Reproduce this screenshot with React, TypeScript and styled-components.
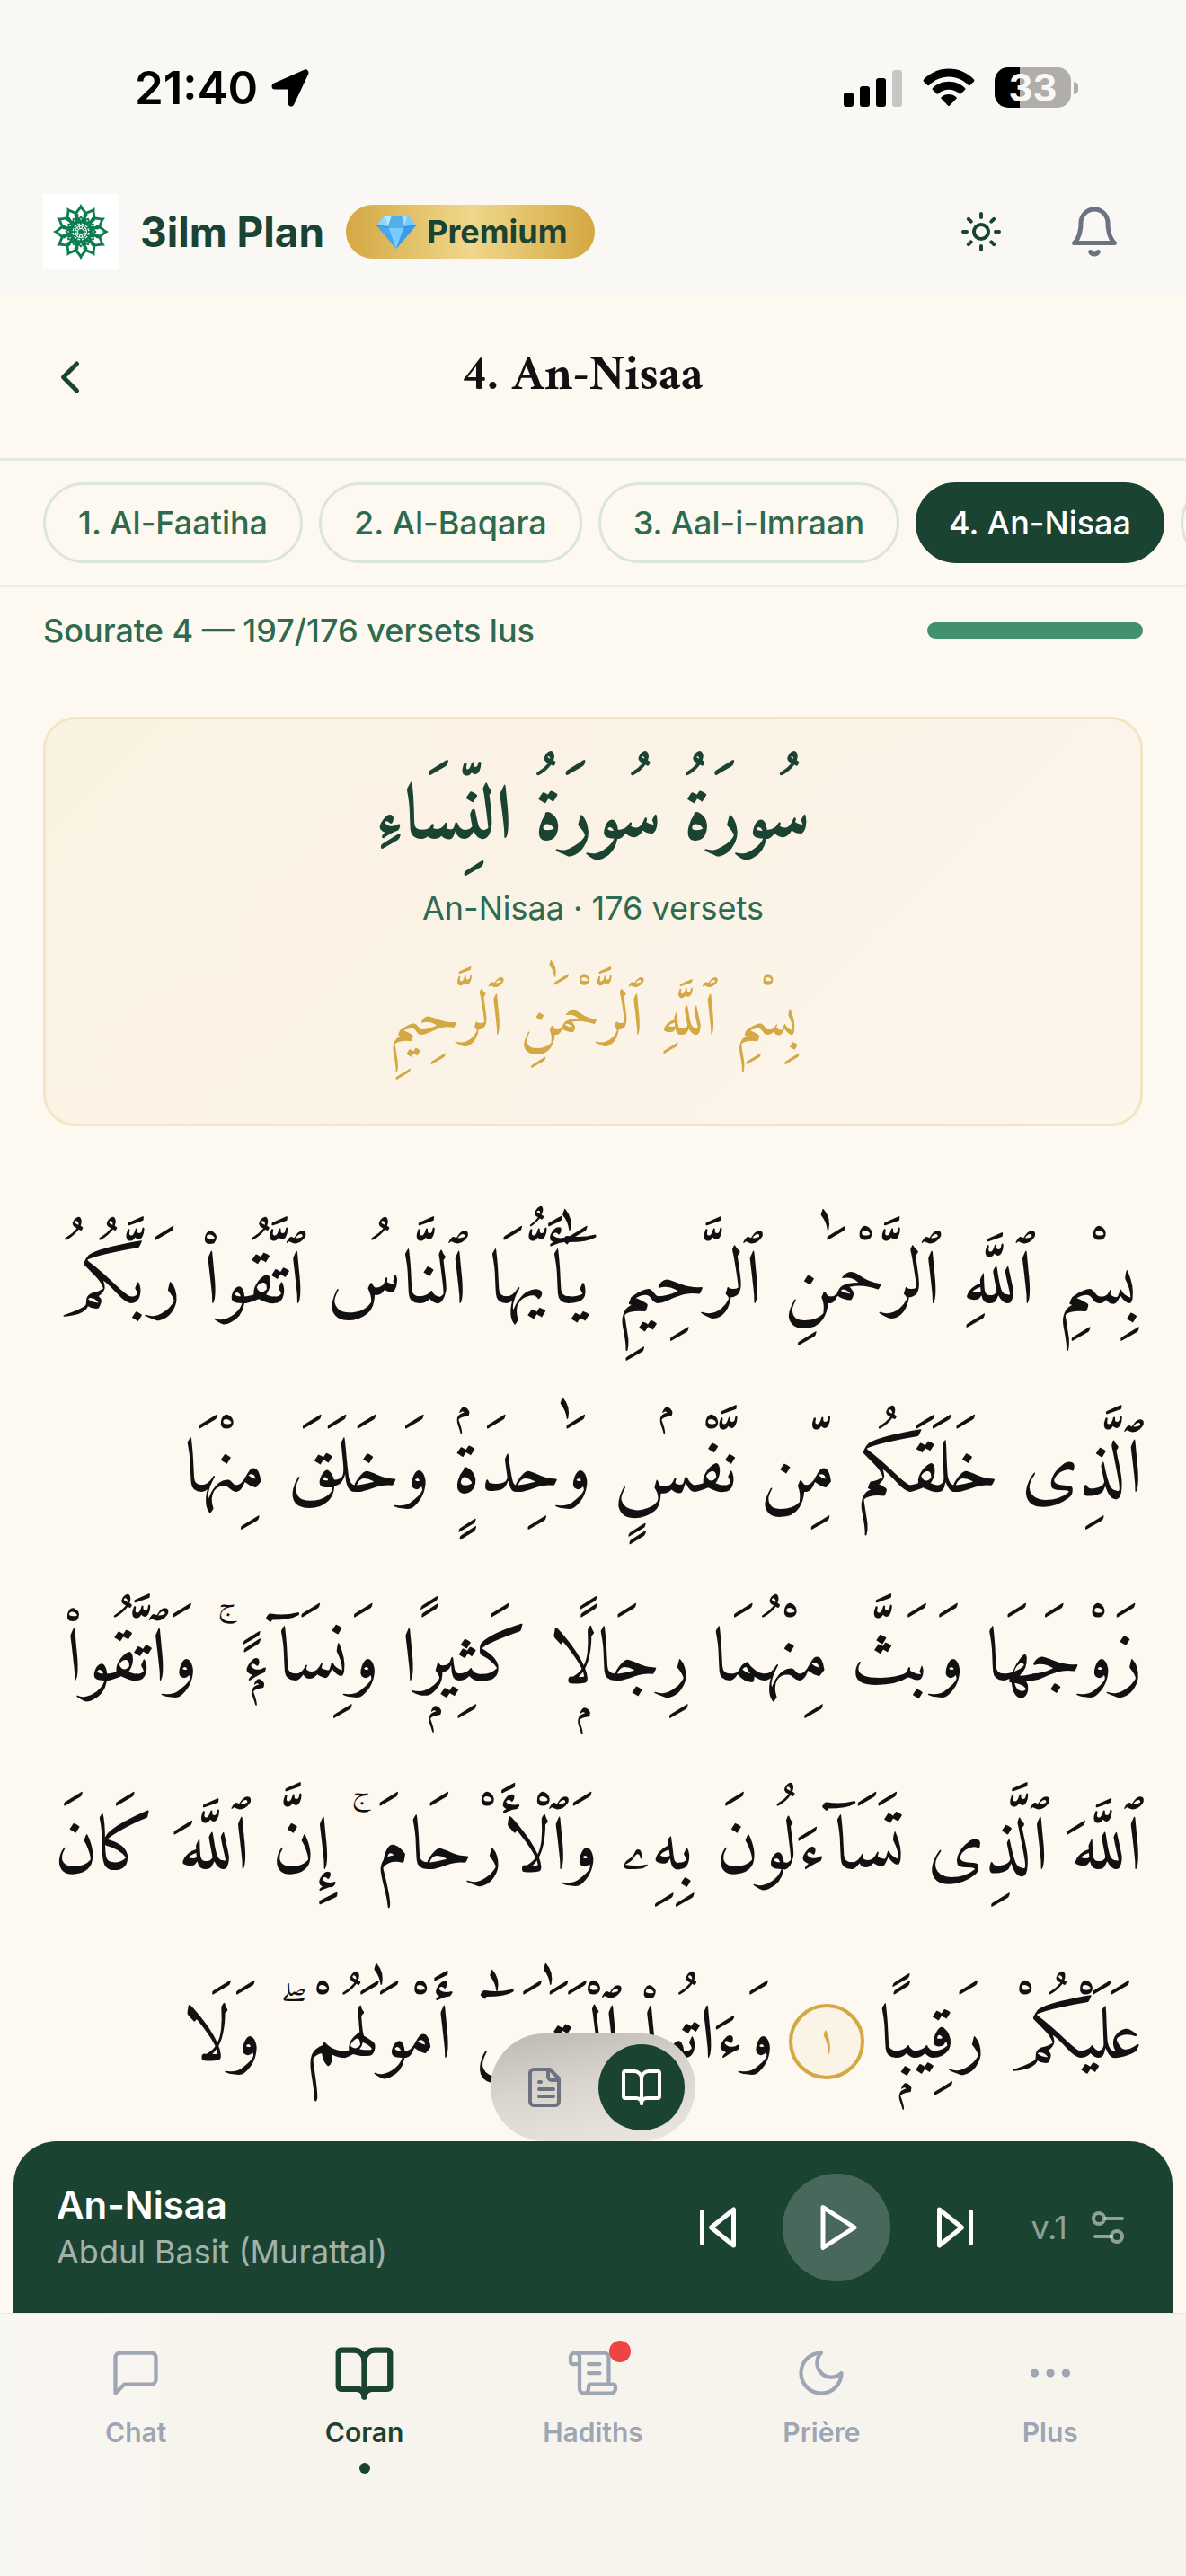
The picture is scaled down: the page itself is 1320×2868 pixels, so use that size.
import React from 'react';
import styled, { createGlobalStyle, css } from 'styled-components';

const color = {
  green: '#1b4332',
  leaf: '#2d6a4f',
  progress: '#40916c',
  gold: '#d4a843',
  cream: '#fef9f0',
  bar: '#f9f8f4',
  line: '#dae6db',
  slate: '#6b7280',
  mist: '#9ea5b3',
  ink: '#111111',
};

const ui = "Inter, 'Liberation Sans', sans-serif";
const quran = "Amiri, 'Scheherazade New', 'DejaVu Sans', serif";

const GlobalStyle = createGlobalStyle`
  *, *::before, *::after { box-sizing: border-box; }
  body { margin: 0; background: ${color.cream}; font-family: ${ui}; color: ${color.ink}; }
  button { margin: 0; padding: 0; border: 0; background: none; font: inherit; color: inherit; cursor: pointer; }
  h1, h2, p, ul { margin: 0; padding: 0; font-weight: inherit; }
  svg { display: block; flex: none; }
`;

const Page = styled.div`
  display: flex;
  flex-direction: column;
  min-height: 100vh;
`;

const StatusBar = styled.div`
  display: flex;
  justify-content: space-between;
  align-items: center;
  padding: 72px 120px 63px 150px;
  background: ${color.bar};
  color: #000;
`;

const StatusGroup = styled.div<{ $gap: number }>`
  display: flex;
  align-items: center;
  gap: ${(p) => p.$gap}px;
`;

const Clock = styled.time`
  font-size: 51px;
  line-height: 51px;
  font-weight: 600;
`;

const Battery = styled.div`
  display: flex;
  align-items: center;
  gap: 3px;
`;

const BatteryBody = styled.div`
  width: 85px;
  border-radius: 15px;
  text-align: center;
  font-size: 42px;
  line-height: 45px;
  font-weight: 700;
  color: ${color.bar};
  background: linear-gradient(90deg, #000 33%, #afaeab 33%);
`;

const BatteryCap = styled.span`
  width: 5px;
  height: 14px;
  border-radius: 0 6px 6px 0;
  background: #afaeab;
`;

const AppBar = styled.header`
  display: flex;
  align-items: center;
  gap: 24px;
  padding: 30px 48px;
  background: ${color.bar};
`;

const LogoTile = styled.div`
  display: grid;
  place-items: center;
  width: 84px;
  height: 84px;
  background: #fff;
`;

const Brand = styled.span`
  font-size: 46px;
  line-height: 60px;
  font-weight: 700;
  color: ${color.green};
`;

const PremiumBadge = styled.span`
  display: flex;
  align-items: center;
  gap: 12px;
  height: 60px;
  padding: 0 30px 0 34px;
  border-radius: 30px;
  font-size: 36px;
  font-weight: 700;
  color: ${color.green};
  background: linear-gradient(90deg, ${color.gold}, #f0d78c 50%, ${color.gold});
`;

const AppActions = styled.div`
  display: flex;
  align-items: center;
  gap: 18px;
  margin-left: auto;
`;

const IconButton = styled.button<{ $size?: number; $tone?: string }>`
  display: grid;
  place-items: center;
  flex: none;
  width: ${(p) => p.$size ?? 108}px;
  height: ${(p) => Math.min(p.$size ?? 84, 96)}px;
  color: ${(p) => p.$tone ?? color.green};
`;

const SurahHeader = styled.div`
  display: flex;
  align-items: center;
  height: 183px;
  padding: 0 48px;
  border-bottom: 3px solid #e3eadf;
  background: #fdf8f0;
`;

const SurahTitle = styled.h1`
  flex: 1;
  padding-right: 84px;
  text-align: center;
  font-family: ${quran};
  font-size: 54px;
  line-height: 84px;
  font-weight: 700;
`;

const TabStrip = styled.nav`
  display: flex;
  gap: 18px;
  padding: 24px 48px;
  border-bottom: 3px solid #eaeee4;
  overflow-x: auto;
  scrollbar-width: none;
`;

const SurahTab = styled.button<{ $active?: boolean }>`
  flex: none;
  height: 90px;
  padding: 0 36px;
  border: 3px solid ${color.line};
  border-radius: 45px;
  font-size: 36px;
  font-weight: 500;
  white-space: nowrap;
  color: ${color.leaf};
  ${(p) =>
    p.$active &&
    css`
      padding: 0 34px;
      border-color: ${color.green};
      background: ${color.green};
      color: #fff;
    `}
`;

const ProgressRow = styled.div`
  display: flex;
  align-items: center;
  justify-content: space-between;
  padding: 24px 48px;
  font-size: 36px;
  line-height: 48px;
  font-weight: 500;
  color: ${color.leaf};
`;

const ProgressBar = styled.div`
  width: 240px;
  height: 18px;
  border-radius: 9px;
  background: ${color.progress};
`;

const Reader = styled.main`
  flex: 1;
  display: flex;
  flex-direction: column;
  gap: 72px;
  padding: 48px 48px 0;
`;

const SurahCard = styled.section`
  padding: 36px;
  border: 3px solid #f3e5c6;
  border-radius: 36px;
  text-align: center;
  background: linear-gradient(135deg, #faf3e1, #fbf2e6 40%, #fdf6ea);
`;

const CardTitle = styled.h2`
  font-family: ${quran};
  font-size: 84px;
  line-height: 152px;
  font-weight: 700;
  color: ${color.green};
`;

const CardMeta = styled.p`
  font-size: 36px;
  line-height: 44px;
  color: ${color.leaf};
`;

const Basmala = styled.p`
  margin-top: 24px;
  font-family: ${quran};
  font-size: 66px;
  line-height: 158px;
  color: ${color.gold};
`;

const Verses = styled.p`
  font-family: ${quran};
  font-size: 84px;
  line-height: 210px;
  text-indent: 6px;
`;

const PauseSign = styled.span`
  font-size: 48px;
  line-height: 48px;
`;

const VerseMark = styled.span`
  display: inline-flex;
  align-items: center;
  justify-content: center;
  width: 84px;
  height: 84px;
  margin: 0 16px;
  border: 4px solid ${color.gold};
  border-radius: 50%;
  vertical-align: middle;
  text-indent: 0;
  font-size: 42px;
  line-height: 76px;
  color: ${color.gold};
  background: #fbf3e6;
`;

const Dock = styled.footer`
  position: relative;
`;

const ViewToggle = styled.div`
  position: absolute;
  bottom: 100%;
  left: 50%;
  transform: translateX(-50%);
  display: flex;
  gap: 12px;
  padding: 12px;
  border-radius: 60px;
  background: linear-gradient(170deg, #c2bfb8 10%, #d9d4ce 45%, #ece7e1);
`;

const ViewButton = styled.button<{ $active?: boolean }>`
  display: grid;
  place-items: center;
  width: 96px;
  height: 96px;
  border-radius: 50%;
  color: ${(p) => (p.$active ? '#fff' : color.slate)};
  background: ${(p) => (p.$active ? color.green : 'transparent')};
`;

const Player = styled.section`
  display: flex;
  align-items: center;
  gap: 24px;
  margin: 0 15px;
  padding: 36px 48px 35px;
  border-radius: 48px 48px 0 0;
  background: ${color.green};
  color: #fff;
`;

const Track = styled.div`
  flex: 1;
`;

const TrackTitle = styled.p`
  font-size: 42px;
  line-height: 54px;
  font-weight: 600;
`;

const TrackReciter = styled.p`
  font-size: 36px;
  line-height: 51px;
  color: rgba(255, 255, 255, 0.6);
`;

const PlayButton = styled.button`
  display: grid;
  place-items: center;
  width: 120px;
  height: 120px;
  border-radius: 50%;
  background: rgba(255, 255, 255, 0.2);
`;

const VerseSettings = styled.button`
  display: flex;
  align-items: center;
  gap: 21px;
  padding-left: 12px;
  font-size: 36px;
  color: rgba(255, 255, 255, 0.5);
`;

const TabBar = styled.nav`
  display: grid;
  grid-template-columns: repeat(5, 1fr);
  align-items: start;
  padding: 30px 24px 114px;
  border-top: 1px solid #eae9e4;
  background: linear-gradient(90deg, #f9f7f2, #f7f4ee 20%, #f7f4ee);
`;

const NavItem = styled.a<{ $active?: boolean }>`
  display: flex;
  flex-direction: column;
  align-items: center;
  gap: 12px;
  text-decoration: none;
  font-size: 30px;
  line-height: 36px;
  font-weight: 600;
  color: ${(p) => (p.$active ? color.green : color.mist)};
`;

const NavIcon = styled.span`
  position: relative;
  display: grid;
  place-items: center;
  width: 72px;
  height: 72px;
`;

const UnreadDot = styled.span`
  position: absolute;
  top: 0;
  right: -6px;
  width: 24px;
  height: 24px;
  border-radius: 50%;
  background: #ef4444;
`;

const ActiveDot = styled.span`
  width: 12px;
  height: 12px;
  margin-top: 4px;
  border-radius: 50%;
  background: ${color.green};
`;

type IconProps = { size: number; stroke?: number; children: React.ReactNode };

const Icon = ({ size, stroke = 2, children }: IconProps) => (
  <svg
    width={size}
    height={size}
    viewBox="0 0 24 24"
    fill="none"
    stroke="currentColor"
    strokeWidth={stroke}
    strokeLinecap="round"
    strokeLinejoin="round"
    aria-hidden="true"
  >
    {children}
  </svg>
);

const bookPaths = (
  <>
    <path d="M12 7v14" />
    <path d="M3 18a1 1 0 0 1-1-1V4a1 1 0 0 1 1-1h5a4 4 0 0 1 4 4 4 4 0 0 1 4-4h5a1 1 0 0 1 1 1v13a1 1 0 0 1-1 1h-6a3 3 0 0 0-3 3 3 3 0 0 0-3-3z" />
  </>
);

const LocationArrow = () => (
  <svg width="42" height="42" viewBox="0 0 42 42" aria-hidden="true">
    <path d="M38 4 L22 38 V19 H4 Z" stroke="#000" strokeWidth="7" strokeLinejoin="round" />
  </svg>
);

const Signal = () => (
  <svg width="66" height="42" viewBox="0 0 66 42" aria-hidden="true">
    <rect x="0" y="26" width="11" height="16" rx="3" />
    <rect x="18" y="19" width="11" height="23" rx="3" />
    <rect x="36" y="10" width="11" height="32" rx="3" />
    <rect x="54" y="1" width="11" height="41" rx="3" fill="#c7c6c4" />
  </svg>
);

const Wifi = () => (
  <svg width="58" height="43" viewBox="0 0 58 43" aria-hidden="true">
    <path d="M29 0.500C18 0.500 8 5 1 12.500Q0 13.700 1 14.700L5.500 19Q6.200 19.500 7 19C13 13 20.500 9.500 29 9.500S45 13 51 19Q51.800 19.500 52.500 19L57 14.700Q58 13.700 57 12.500C50 5 40 0.500 29 0.500Z" />
    <path d="M29 14.800C22 14.800 15.500 17.500 10.800 22.200Q10.200 23 10.800 23.700L15.700 28.500Q16.300 29 17 28.500C20.200 25.500 24.400 23.800 29 23.800S37.800 25.500 41 28.500Q41.700 29 42.300 28.500L47.200 23.700Q47.800 23 47.200 22.200C42.500 17.500 36 14.800 29 14.800Z" />
    <path d="M29 29C25.600 29 22.700 30.200 20.500 32.300Q20 33 20.500 33.700L28.200 41.700Q29 42.500 29.800 41.700L37.500 33.700Q38 33 37.500 32.300C35.300 30.200 32.400 29 29 29Z" />
  </svg>
);

const twelfths = Array.from({ length: 12 }, (_, i) => i * 30);

const Rosette = () => (
  <svg width="62" height="62" viewBox="-31 -31 62 62" fill="none" stroke="#0a7d4e" aria-hidden="true">
    {twelfths.map((a) => (
      <g key={a} transform={`rotate(${a})`}>
        <path d="M0 -28C-2 -24 -6 -22 -6 -18.500C-5 -16 -2 -14 0 -10C2 -14 5 -16 6 -18.500C6 -22 2 -24 0 -28Z" strokeWidth="2.800" />
        <path d="M0 -17C-2 -14 -3 -12 -2.500 -9M0 -17C2 -14 3 -12 2.500 -9" strokeWidth="1.600" />
        <path d="M0 -6V-4" strokeWidth="1.500" />
      </g>
    ))}
    <circle r="7.500" strokeWidth="1.200" />
    <circle r="3" fill="#0a7d4e" stroke="none" />
  </svg>
);

const Gem = () => (
  <svg width="44" height="38" viewBox="0 0 44 38" aria-hidden="true">
    <path d="M9 1H35L44 12L22 38L0 12Z" fill="#4db5f5" />
    <path d="M9 1L13 13L0 12Z" fill="#8fd6fb" />
    <path d="M9 1H17L13 13Z" fill="#b9e7fd" />
    <path d="M17 1H28L31 13H13Z" fill="#55aee6" />
    <path d="M28 1H35L31 13Z" fill="#a5defc" />
    <path d="M35 1L44 12L31 13Z" fill="#7accf9" />
    <path d="M0 12L13 13L22 38Z" fill="#4aa6ee" />
    <path d="M13 13H31L22 38Z" fill="#74cdfd" />
    <path d="M31 13L44 12L22 38Z" fill="#3d9ae8" />
    <path d="M0 12L13 14H31L44 12" fill="none" stroke="#3b8fcf" strokeWidth="1" />
  </svg>
);

const surahs = ['1. Al-Faatiha', '2. Al-Baqara', '3. Aal-i-Imraan', '4. An-Nisaa', '5. Al-Maaida'];
const current = '4. An-Nisaa';

const navItems = [
  { label: 'Chat', icon: <path d="M21 15a2 2 0 0 1-2 2H7l-4 4V5a2 2 0 0 1 2-2h14a2 2 0 0 1 2 2z" /> },
  { label: 'Coran', icon: bookPaths, active: true },
  {
    label: 'Hadiths',
    unread: true,
    icon: (
      <>
        <path d="M15 12h-5" />
        <path d="M15 8h-5" />
        <path d="M19 17V5a2 2 0 0 0-2-2H4" />
        <path d="M8 21h12a2 2 0 0 0 2-2v-1a1 1 0 0 0-1-1H11a1 1 0 0 0-1 1v1a2 2 0 1 1-4 0V5a2 2 0 1 0-4 0v2a1 1 0 0 0 1 1h3" />
      </>
    ),
  },
  { label: 'Prière', icon: <path d="M12 3a6 6 0 0 0 9 9 9 9 0 1 1-9-9Z" /> },
  {
    label: 'Plus',
    icon: (
      <>
        <circle cx="12" cy="12" r="1" />
        <circle cx="19" cy="12" r="1" />
        <circle cx="5" cy="12" r="1" />
      </>
    ),
  },
];

const basmala = 'بِسْمِ ٱللَّهِ ٱلرَّحْمَٰنِ ٱلرَّحِيمِ';

/* Each verse is split where a small pause sign stands between two words. */
const verses = [
  [
    'يَٰٓأَيُّهَا ٱلنَّاسُ ٱتَّقُوا۟ رَبَّكُمُ ٱلَّذِى خَلَقَكُم مِّن نَّفْسٍۢ وَٰحِدَةٍۢ وَخَلَقَ مِنْهَا زَوْجَهَا وَبَثَّ مِنْهُمَا رِجَالًۭا كَثِيرًۭا وَنِسَآءًۭ',
    '\u06DA',
    'وَٱتَّقُوا۟ ٱللَّهَ ٱلَّذِى تَسَآءَلُونَ بِهِۦ وَٱلْأَرْحَامَ',
    '\u06DA',
    'إِنَّ ٱللَّهَ كَانَ عَلَيْكُمْ رَقِيبًۭا',
  ],
  ['وَءَاتُوا۟ ٱلْيَتَٰمَىٰٓ أَمْوَٰلَهُمْ', '\u06D6', 'وَلَا'],
];

const Verse = ({ parts }: { parts: string[] }) => (
  <>
    {parts.map((part, i) =>
      i % 2 ? (
        <React.Fragment key={i}>
          {' '}
          <PauseSign>{part}</PauseSign>{' '}
        </React.Fragment>
      ) : (
        <React.Fragment key={i}>{part}</React.Fragment>
      ),
    )}
  </>
);

export default function App() {
  return (
    <Page>
      <GlobalStyle />
      <StatusBar>
        <StatusGroup $gap={15}>
          <Clock>21:40</Clock>
          <LocationArrow />
        </StatusGroup>
        <StatusGroup $gap={22}>
          <Signal />
          <Wifi />
          <Battery>
            <BatteryBody>33</BatteryBody>
            <BatteryCap />
          </Battery>
        </StatusGroup>
      </StatusBar>

      <AppBar>
        <LogoTile>
          <Rosette />
        </LogoTile>
        <Brand>3ilm Plan</Brand>
        <PremiumBadge>
          <Gem />
          Premium
        </PremiumBadge>
        <AppActions>
          <IconButton aria-label="Thème">
            <Icon size={48}>
              <circle cx="12" cy="12" r="4" />
              <path d="M12 2v2M12 20v2M4.930 4.930l1.410 1.410M17.660 17.660l1.410 1.410M2 12h2M20 12h2M6.340 17.660l-1.410 1.410M19.070 4.930l-1.410 1.410" />
            </Icon>
          </IconButton>
          <IconButton $tone={color.slate} aria-label="Notifications">
            <Icon size={60}>
              <path d="M6 8a6 6 0 0 1 12 0c0 7 3 9 3 9H3s3-2 3-9" />
              <path d="M10.300 21a1.940 1.940 0 0 0 3.400 0" />
            </Icon>
          </IconButton>
        </AppActions>
      </AppBar>

      <SurahHeader>
        <IconButton $size={60} aria-label="Retour">
          <Icon size={60}>
            <path d="m15 18-6-6 6-6" />
          </Icon>
        </IconButton>
        <SurahTitle>{current}</SurahTitle>
      </SurahHeader>

      <TabStrip aria-label="Sourates">
        {surahs.map((name) => (
          <SurahTab key={name} $active={name === current}>
            {name}
          </SurahTab>
        ))}
      </TabStrip>

      <ProgressRow>
        <span>Sourate 4 — 197/176 versets lus</span>
        <ProgressBar role="progressbar" aria-label="Versets lus" aria-valuenow={100} />
      </ProgressRow>

      <Reader>
        <SurahCard>
          <CardTitle lang="ar" dir="rtl">سُورَةُ سُورَةُ النِّسَاءِ</CardTitle>
          <CardMeta>An-Nisaa · 176 versets</CardMeta>
          <Basmala lang="ar" dir="rtl">{basmala}</Basmala>
        </SurahCard>
        <Verses lang="ar" dir="rtl">
          {basmala} <Verse parts={verses[0]} />
          <VerseMark>١</VerseMark>
          <Verse parts={verses[1]} />
        </Verses>
      </Reader>

      <Dock>
        <ViewToggle>
          <ViewButton aria-label="Liste">
            <Icon size={48}>
              <path d="M15 2H6a2 2 0 0 0-2 2v16a2 2 0 0 0 2 2h12a2 2 0 0 0 2-2V7Z" />
              <path d="M14 2v4a2 2 0 0 0 2 2h4" />
              <path d="M10 9H9M17 13H9M17 17H9" />
            </Icon>
          </ViewButton>
          <ViewButton $active aria-label="Livre">
            <Icon size={48}>{bookPaths}</Icon>
          </ViewButton>
        </ViewToggle>

        <Player aria-label="Lecteur">
          <Track>
            <TrackTitle>An-Nisaa</TrackTitle>
            <TrackReciter>Abdul Basit (Murattal)</TrackReciter>
          </Track>
          <IconButton $size={96} $tone="#fff" aria-label="Précédent">
            <Icon size={60}>
              <path d="M19 20 9 12l10-8v16zM5 19V5" />
            </Icon>
          </IconButton>
          <PlayButton aria-label="Lire">
            <Icon size={60}>
              <path d="m6 3 14 9-14 9V3z" />
            </Icon>
          </PlayButton>
          <IconButton $size={96} $tone="#fff" aria-label="Suivant">
            <Icon size={60}>
              <path d="m5 4 10 8-10 8V4zM19 5v14" />
            </Icon>
          </IconButton>
          <VerseSettings>
            v.1
            <Icon size={48}>
              <path d="M20 7h-9M14 17H5" />
              <circle cx="17" cy="17" r="3" />
              <circle cx="7" cy="7" r="3" />
            </Icon>
          </VerseSettings>
        </Player>

        <TabBar aria-label="Navigation">
          {navItems.map((item) => (
            <NavItem key={item.label} href={`#${item.label}`} $active={item.active}>
              <NavIcon>
                <Icon size={item.active ? 69 : 60} stroke={item.active ? 2.2 : 1.7}>
                  {item.icon}
                </Icon>
                {item.unread && <UnreadDot />}
              </NavIcon>
              {item.label}
              {item.active && <ActiveDot />}
            </NavItem>
          ))}
        </TabBar>
      </Dock>
    </Page>
  );
}
